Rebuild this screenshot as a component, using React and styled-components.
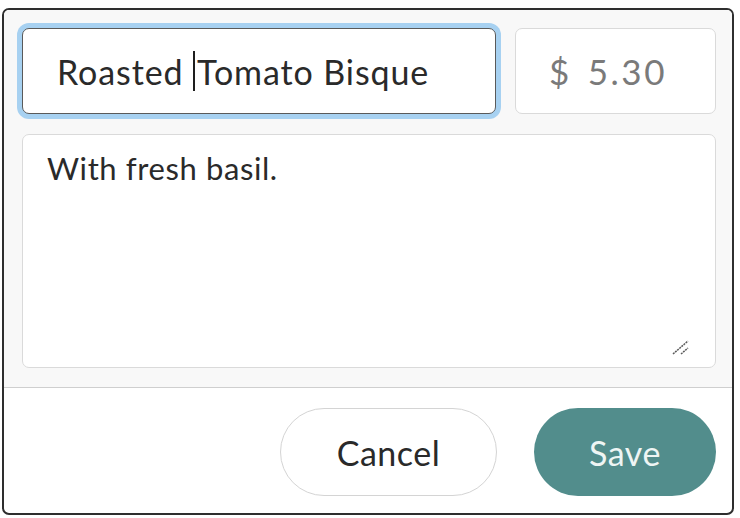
import React from 'react';
import styled, { createGlobalStyle } from 'styled-components';

const GlobalStyle = createGlobalStyle`
  html, body {
    margin: 0;
    padding: 0;
    background: #fff;
  }
  body {
    padding: 8px 0 0 2px;
    font-family: Lato, "Noto Sans", sans-serif;
  }
`;

const EditItem = () => {
  return (
    <>
      <GlobalStyle />
      <Card>
        <Fields>
          <TopRow>
            <NameField>
              Roasted <Caret />Tomato Bisque
            </NameField>
            <PriceField>
              <Currency>$</Currency>5.30
            </PriceField>
          </TopRow>
          <NoteWrap>
            <Note defaultValue="With fresh basil." />
            <Grip width="18" height="16" viewBox="0 0 18 16">
              <path d="M1 15 L16 2" stroke="#5c5c5c" strokeWidth="1.5" strokeDasharray="2 0.8" />
              <path d="M9 15 L16 9" stroke="#5c5c5c" strokeWidth="1.5" strokeDasharray="2 0.8" />
            </Grip>
          </NoteWrap>
        </Fields>
        <Actions>
          <Button>Cancel</Button>
          <Button primary>Save</Button>
        </Actions>
      </Card>
    </>
  );
};

// styled-components
const Card = styled.div`
  width: 732px;
  height: 507px;
  box-sizing: border-box;
  border: 2px solid #2e2e2e;
  border-radius: 7px;
  overflow: hidden;
  display: flex;
  flex-direction: column;
  background: #fff;
`;
const Fields = styled.div`
  background: #f8f8f8;
  padding: 18px 16px 19px 18px;
  display: flex;
  flex-direction: column;
  gap: 20px;
  border-bottom: 1.5px solid #cfcfcf;
`;
const TopRow = styled.div`
  display: grid;
  grid-template-columns: 474px 201px;
  gap: 19px;
  height: 86px;
`;
const Field = styled.div`
  box-sizing: border-box;
  display: flex;
  align-items: center;
  background: #fff;
  border-radius: 7px;
  white-space: pre;
`;
const NameField = styled(Field)`
  border: 1.5px solid #5a5a5a;
  box-shadow: 0 0 0 5px #a7d1f1;
  padding-left: 34px;
  font-size: 34px;
  letter-spacing: 0.9px;
  color: #2a2a2a;
`;
const Caret = styled.span`
  display: inline-block;
  width: 2px;
  height: 40px;
  margin: 0 2px 0 0;
  background: #1e1e1e;
`;
const PriceField = styled(Field)`
  border: 1.5px solid #dadada;
  padding-left: 33px;
  font-size: 35px;
  letter-spacing: 2.5px;
  color: #7a7a7a;
`;
const Currency = styled.span`
  margin-right: 16px;
`;
const NoteWrap = styled.div`
  position: relative;
  height: 234px;
`;
const Note = styled.textarea`
  display: block;
  width: 100%;
  height: 100%;
  box-sizing: border-box;
  border: 1.5px solid #dadada;
  border-radius: 7px;
  background: #fff;
  padding: 14px 24px;
  font-family: Lato, "Noto Sans", sans-serif;
  font-size: 31px;
  letter-spacing: 0.6px;
  color: #2a2a2a;
  resize: none;
  outline: none;
`;
const Grip = styled.svg`
  position: absolute;
  right: 26px;
  bottom: 13px;
`;
const Actions = styled.div`
  flex: 1;
  display: flex;
  justify-content: flex-end;
  align-items: flex-start;
  gap: 37px;
  padding: 20px 16px 0 0;
`;
const Button = styled.button`
  height: 88px;
  width: ${(p) => (p.primary ? '182px' : '217px')};
  border-radius: 44px;
  border: ${(p) => (p.primary ? 'none' : '1.5px solid #d4d4d4')};
  background: ${(p) => (p.primary ? '#528d8c' : '#fff')};
  color: ${(p) => (p.primary ? '#eef5f4' : '#2a2a2a')};
  font-family: Lato, "Noto Sans", sans-serif;
  font-size: 34px;
  letter-spacing: 0.5px;
  cursor: pointer;
`;

export default EditItem;
